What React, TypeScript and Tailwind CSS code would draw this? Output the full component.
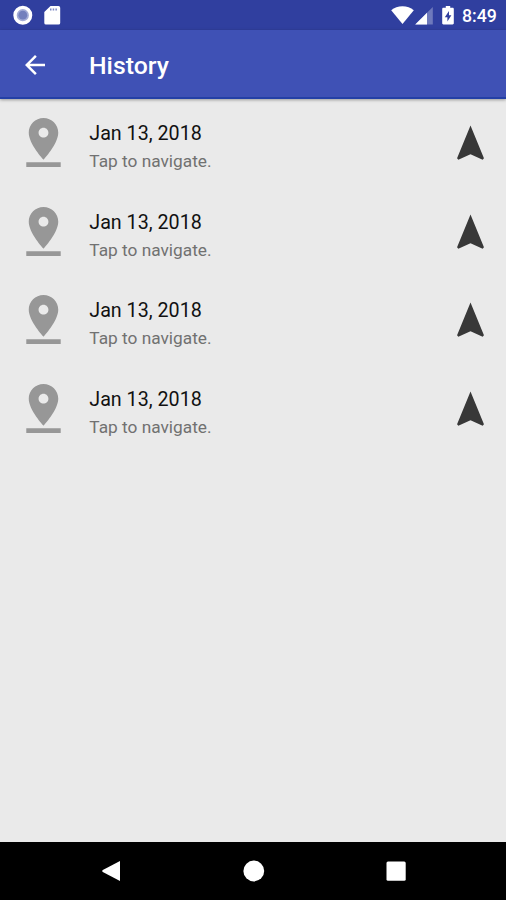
const entries = [
  { id: 1, date: 'Jan 13, 2018' },
  { id: 2, date: 'Jan 13, 2018' },
  { id: 3, date: 'Jan 13, 2018' },
  { id: 4, date: 'Jan 13, 2018' },
]

function StatusBar() {
  return (
    <div className="h-[30px] shrink-0 bg-[#303f9f] flex items-center justify-between pl-[13px] pr-[9px] text-white">
      <div className="flex items-center gap-[11px]">
        <svg className="w-5 h-5" viewBox="0 0 20 20">
          <circle cx="9.8" cy="10.2" r="7.8" fill="#a3acd6" stroke="white" strokeWidth="3.4" />
          <circle cx="9.8" cy="10.2" r="4.4" fill="#7380bd" />
        </svg>
        <svg className="w-[17px] h-5" viewBox="0 0 17 20" fill="currentColor">
          <path d="M6.5 1H14.5a1.7 1.7 0 0 1 1.7 1.7V17.9a1.7 1.7 0 0 1-1.7 1.7H2a1.7 1.7 0 0 1-1.7-1.7V7z" />
          <path d="M6 3.5h1.5v2H6zM8.7 3.5h1.5v2H8.7zM11.4 3.5h1.5v2h-1.5z" fill="#7d88c4" />
        </svg>
      </div>
      <div className="flex items-center">
        <svg className="w-[23px] h-5" viewBox="0 0 23 20" fill="currentColor">
          <path d="M.2 5.3C3.3 2.7 7.2 1.2 11.5 1.2s8.2 1.5 11.3 4.1L11.5 19z" />
        </svg>
        <svg className="w-[18px] h-5 ml-[1px]" viewBox="0 0 18 20" fill="currentColor">
          <path d="M.2 19.5L17.8 2v17.5z" opacity=".3" />
          <path d="M.2 19.5L12 7.7v11.8z" />
        </svg>
        <svg className="w-3 h-5 ml-[9px]" viewBox="0 0 12 20" fill="currentColor">
          <path d="M3.8 1h4.4v1.8h2.4c.7 0 1.2.5 1.2 1.2v14.3c0 .7-.5 1.2-1.2 1.2H1.4c-.7 0-1.2-.5-1.2-1.2V4c0-.7.5-1.2 1.2-1.2h2.4z" />
          <path d="M7 6L2.8 12.2h2.6v4.4l4-6.4H7z" fill="#303f9f" />
        </svg>
        <span className="ml-[8px] mt-[2px] w-[35px] text-[17.7px] leading-5 font-medium whitespace-nowrap">8:49</span>
      </div>
    </div>
  )
}

function PinIcon() {
  return (
    <svg className="w-[59px] h-[59px] shrink-0 text-[#979797]" viewBox="0 0 24 24" fill="currentColor">
      <path d="M18 8c0-3.31-2.69-6-6-6S6 4.69 6 8c0 4.5 6 11 6 11s6-6.5 6-11zm-8 0c0-1.1.9-2 2-2s2 .9 2 2-.89 2-2 2c-1.1 0-2-.9-2-2zM5 20v2h14v-2H5z" />
    </svg>
  )
}

function NavigateIcon() {
  return (
    <svg className="w-[43px] h-[43px] mt-[2px] shrink-0 text-[#383838]" viewBox="0 0 24 24" fill="currentColor">
      <path d="M12 2L4.5 20.29l.71.71L12 18l6.79 3 .71-.71z" />
    </svg>
  )
}

function HistoryRow({ date }: { date: string }) {
  return (
    <li className="h-[88.6px] flex items-center pl-[14.3px] pr-[14px]">
      <PinIcon />
      <div className="ml-[16px] pt-[9px] flex-1">
        <div className="text-[19.7px] leading-[26px] text-[#111111]">{date}</div>
        <div className="mt-[2px] text-[17.3px] leading-[24px] text-[#717171]">Tap to navigate.</div>
      </div>
      <NavigateIcon />
    </li>
  )
}

export default function App() {
  return (
    <div className="w-[506px] h-[900px] flex flex-col overflow-hidden bg-[#eaeaea] font-['Roboto',sans-serif]">
      <StatusBar />

      {/* App bar */}
      <header className="h-[69px] shrink-0 bg-[#3f51b5] border-b-2 border-[#2440a6] shadow-[0_1px_3px_rgba(0,0,0,0.35)] flex items-center pl-[20px] pt-[2px] text-white">
        <svg className="w-[30px] h-[30px]" viewBox="0 0 24 24" fill="currentColor">
          <path d="M20 11H7.83l5.59-5.59L12 4l-8 8 8 8 1.41-1.41L7.83 13H20v-2z" />
        </svg>
        <h1 className="ml-[39px] pt-[3px] text-[24.8px] leading-[30px] font-medium">History</h1>
      </header>

      <main className="flex-1">
        <ul className="-mt-[0.7px]">
          {entries.map(entry => (
            <HistoryRow key={entry.id} date={entry.date} />
          ))}
        </ul>
      </main>

      {/* System navigation */}
      <nav className="h-[58px] shrink-0 bg-black flex items-center justify-between pl-[101px] pr-[99px] text-white">
        <svg className="w-[22px] h-[22px]" viewBox="0 0 22 22" fill="currentColor">
          <path d="M19 .9v20.2L1.8 11.9c-.8-.5-.8-1.3 0-1.8z" />
        </svg>
        <svg className="w-[22px] h-[22px]" viewBox="0 0 22 22" fill="currentColor">
          <circle cx="10.8" cy="11" r="10.4" />
        </svg>
        <svg className="w-[22px] h-[22px]" viewBox="0 0 22 22" fill="currentColor">
          <rect x="1.5" y="1.5" width="19.2" height="19.2" rx="1.5" />
        </svg>
      </nav>
    </div>
  )
}
